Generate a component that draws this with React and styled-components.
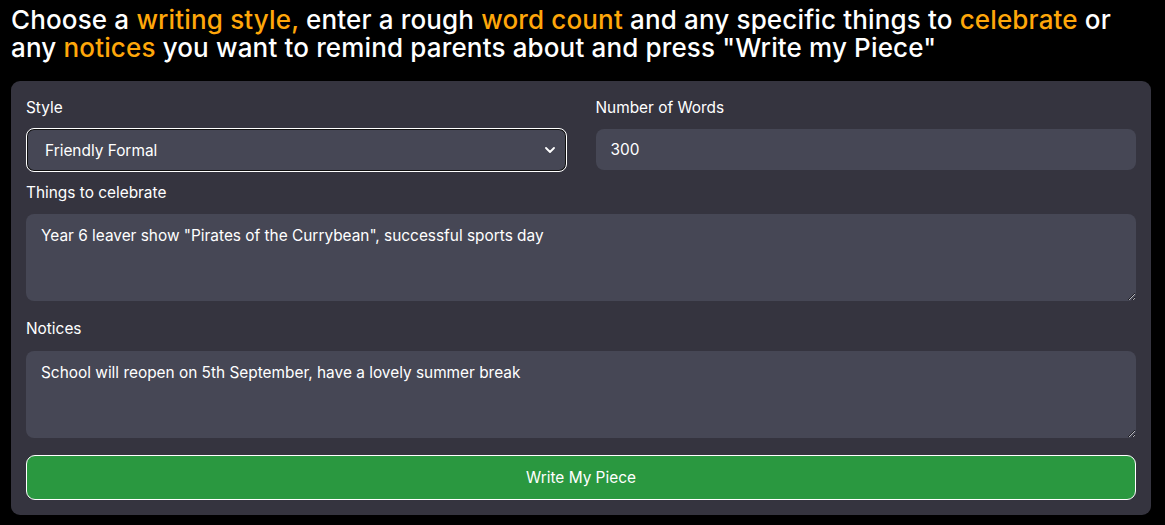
import React, { useState } from 'react';
import styled, { createGlobalStyle } from 'styled-components';

const GlobalStyle = createGlobalStyle`
  html, body {
    margin: 0;
    background: #000;
  }
  body {
    font-family: Inter, "Noto Sans", sans-serif;
    color: #fff;
  }
`;

const Page = styled.div`
  padding: 6px 14px 10px 11px;
`;

const Heading = styled.h1`
  margin: 0 0 19px;
  font-size: 26px;
  font-weight: 500;
  line-height: 28px;
  letter-spacing: 0.15px;
  color: #fff;
  white-space: nowrap;
`;

const Accent = styled.span`
  color: #ffa70a;
`;

const Card = styled.form`
  background: #35343f;
  border-radius: 9px;
  padding: 16px 15px 15px;
  display: flex;
  flex-direction: column;
`;

const TopRow = styled.div`
  display: grid;
  grid-template-columns: 1fr 1fr;
  column-gap: 29px;
`;

const Field = styled.div`
  display: flex;
  flex-direction: column;
  margin-bottom: ${(p) => p.$space || 0}px;
`;

const Label = styled.label`
  font-size: 15.4px;
  line-height: 22px;
  margin-bottom: ${(p) => p.$gap || 10}px;
  color: #fff;
`;

const Select = styled.select`
  appearance: none;
  height: 44px;
  border: 1px solid #fff;
  border-radius: 8px;
  box-shadow: inset 0 0 0 1px #111;
  background: #464755 url("data:image/svg+xml;utf8,<svg xmlns='http://www.w3.org/2000/svg' width='10' height='6' viewBox='0 0 10 6'><path d='M1 1l4 4 4-4' fill='none' stroke='white' stroke-width='1.8' stroke-linecap='round' stroke-linejoin='round'/></svg>") no-repeat right 11px center;
  color: #fff;
  font: inherit;
  font-size: 15.4px;
  padding: 0 18px;
  outline: none;
`;

const Input = styled.input`
  height: 41px;
  margin-top: 1px;
  border: none;
  border-radius: 8px;
  background: #464755;
  color: #fff;
  font: inherit;
  font-size: 15.4px;
  padding: 0 15px;
  outline: none;
`;

const Area = styled.textarea`
  height: 87px;
  border: none;
  border-radius: 8px;
  background: #464755;
  color: #fff;
  font: inherit;
  font-size: 15.4px;
  line-height: 22px;
  padding: 11px 15px 10px;
  resize: vertical;
  outline: none;
  color-scheme: dark;
  box-sizing: border-box;
`;

const SubmitButton = styled.button`
  height: 45px;
  border: 1px solid #fff;
  border-radius: 9px;
  background: #2a9840;
  color: #fff;
  font: inherit;
  font-size: 15.4px;
  cursor: pointer;
`;

const App = () => {
  const [style, setStyle] = useState('friendly-formal');
  const [words, setWords] = useState('300');
  const [celebrate, setCelebrate] = useState('Year 6 leaver show "Pirates of the Currybean", successful sports day');
  const [notices, setNotices] = useState('School will reopen on 5th September, have a lovely summer break');

  return (
    <>
      <GlobalStyle />
      <Page>
        <Heading>
          Choose a <Accent>writing style,</Accent> enter a rough <Accent>word count</Accent> and any specific things to <Accent>celebrate</Accent> or
          <br />
          any <Accent>notices</Accent> you want to remind parents about and press "Write my Piece"
        </Heading>
        <Card onSubmit={(e) => e.preventDefault()}>
          <TopRow>
            <Field $space={10}>
              <Label $gap={9}>Style</Label>
              <Select value={style} onChange={(e) => setStyle(e.target.value)}>
                <option value="friendly-formal">Friendly Formal</option>
                <option value="formal">Formal</option>
                <option value="casual">Casual</option>
              </Select>
            </Field>
            <Field $space={10}>
              <Label $gap={9}>Number of Words</Label>
              <Input value={words} onChange={(e) => setWords(e.target.value)} />
            </Field>
          </TopRow>
          <Field $space={17}>
            <Label>Things to celebrate</Label>
            <Area value={celebrate} onChange={(e) => setCelebrate(e.target.value)} />
          </Field>
          <Field $space={17}>
            <Label $gap={11}>Notices</Label>
            <Area value={notices} onChange={(e) => setNotices(e.target.value)} />
          </Field>
          <SubmitButton type="submit">Write My Piece</SubmitButton>
        </Card>
      </Page>
    </>
  );
};

export default App;
